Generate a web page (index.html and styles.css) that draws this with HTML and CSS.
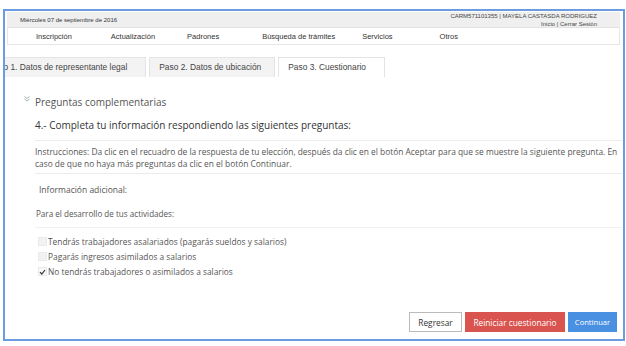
FILE: index.html
```html
<!DOCTYPE html>
<html lang="es">
<head>
<meta charset="utf-8">
<link rel="stylesheet" href="styles.css">
</head>
<body>
<div class="frame">
  <div class="header">
    <div class="topbar">
      <span class="date">Miércoles 07 de septiembre de 2016</span>
      <div class="user">
        <div>CARM571101355 | MAYELA CASTASDA RODRIGUEZ</div>
        <div>Inicio | Cerrar Sesión</div>
      </div>
    </div>
    <nav class="nav">
      <span class="n1">Inscripción</span>
      <span class="n2">Actualización</span>
      <span class="n3">Padrones</span>
      <span class="n4">Búsqueda de trámites</span>
      <span class="n5">Servicios</span>
      <span class="n6">Otros</span>
    </nav>
  </div>
  <div class="tabs">
    <div class="tabtrack">
      <div class="tab t1">Paso 1. Datos de representante legal</div>
      <div class="tab t2">Paso 2. Datos de ubicación</div>
      <div class="tab t3 active">Paso 3. Cuestionario</div>
    </div>
  </div>
  <div class="content">
    <div class="section-title">
      <svg class="collapse" width="6" height="6" viewBox="0 0 6 6"><path d="M0.5 0.5 L3 2.5 L5.5 0.5 M0.5 3 L3 5 L5.5 3" fill="none" stroke="#9aa" stroke-width="0.9"/></svg>
      <span>Preguntas complementarias</span>
    </div>
    <h2 class="question">4.- Completa tu información respondiendo las siguientes preguntas:</h2>
    <p class="instructions">Instrucciones: Da clic en el recuadro de la respuesta de tu elección, después da clic en el botón Aceptar para que se muestre la siguiente pregunta. En caso de que no haya más preguntas da clic en el botón Continuar.</p>
    <div class="info">Información adicional:</div>
    <div class="sub">Para el desarrollo de tus actividades:</div>
    <ul class="options">
      <li><span class="box"></span>Tendrás trabajadores asalariados (pagarás sueldos y salarios)</li>
      <li><span class="box"></span>Pagarás ingresos asimilados a salarios</li>
      <li><span class="box checked"><svg width="7" height="6" viewBox="0 0 7 6"><path d="M1 3.2 L2.8 5 L6 1" fill="none" stroke="#333" stroke-width="1.2"/></svg></span>No tendrás trabajadores o asimilados a salarios</li>
    </ul>
    <div class="actions">
      <button class="btn back">Regresar</button>
      <button class="btn reset">Reiniciar cuestionario</button>
      <button class="btn next">Continuar</button>
    </div>
  </div>
</div>
</body>
</html>
```
FILE: styles.css
```css
html, body {
  margin: 0;
  padding: 0;
  background: #fff;
}
.frame {
  margin: 9px 1px 0 3px;
  height: 328px;
  border: 2px solid #6b9be0;
  display: flex;
  flex-direction: column;
  font-family: "Open Sans", sans-serif;
  color: #555;
  overflow: hidden;
}
.header {
  margin: 1px 3px 0 2px;
  font-family: "Liberation Sans", Arial, sans-serif;
}
.topbar {
  background: #efefef;
  height: 15px;
  display: flex;
  justify-content: space-between;
  align-items: flex-start;
  border-bottom: 1px solid #e2e2e2;
}
.date {
  font-size: 6px;
  color: #333;
  padding: 5px 0 0 13px;
}
.user {
  font-size: 6px;
  color: #444;
  text-align: right;
  padding: 0 23px 0 0;
  line-height: 8px;
}
.nav {
  height: 16px;
  border: 1px solid #e6e6e6;
  border-top: none;
  display: flex;
  align-items: center;
  font-size: 7.5px;
  color: #333;
}
.nav span { display: block; }
.n1 { margin-left: 28px; }
.n2 { margin-left: 39px; }
.n3 { margin-left: 32px; }
.n4 { margin-left: 43px; }
.n5 { margin-left: 27px; }
.n6 { margin-left: 47px; }
.tabs {
  margin-top: 12px;
  height: 20px;
  overflow: hidden;
  font-family: "Liberation Sans", Arial, sans-serif;
  font-size: 8.4px;
}
.tabtrack {
  display: flex;
  gap: 3px;
  margin-left: -29px;
}
.tab {
  height: 19px;
  line-height: 19px;
  background: #f3f3f3;
  border: 1px solid #e4e4e4;
  border-bottom: none;
  color: #444;
  white-space: nowrap;
}
.t1 { padding: 0 18px 0 12px; }
.t2 { padding: 0 13px 0 9px; }
.t3 { padding: 0 18px 0 9px; }
.tab.active { background: #fff; }
.content {
  padding: 0 1px 0 30px;
  flex: 1;
  display: flex;
  flex-direction: column;
}
.section-title {
  position: relative;
  margin-top: 18px;
  font-size: 10px;
  color: #555;
  line-height: 14px;
}
.collapse {
  position: absolute;
  left: -11px;
  top: 1px;
}
.question {
  margin: 9px 0 0;
  font-size: 10px;
  font-weight: 400;
  color: #333;
  line-height: 15px;
  padding-bottom: 7px;
  border-bottom: 1px solid #ececec;
}
.instructions {
  margin: 0;
  padding: 5px 0 3px;
  font-size: 8.4px;
  line-height: 12px;
  color: #555;
  border-bottom: 1px solid #ececec;
}
.info {
  margin-top: 10px;
  padding-left: 4px;
  font-size: 8.5px;
  color: #555;
}
.sub {
  margin-top: 13px;
  padding-left: 1px;
  font-size: 8.1px;
  color: #555;
  padding-bottom: 8px;
  border-bottom: 1px solid #f0f0f0;
}
.options {
  list-style: none;
  margin: 6px 0 0;
  padding: 0 0 0 3px;
  font-size: 8.35px;
  color: #555;
}
.options li {
  display: flex;
  align-items: center;
  height: 15px;
}
.box {
  width: 9px;
  height: 9px;
  background: #f2f2f2;
  border: 1px solid #eaeaea;
  box-sizing: border-box;
  margin-right: 1px;
  display: flex;
  align-items: center;
  justify-content: center;
}
.box.checked { background: #f7f7f7; }
.actions {
  margin-top: auto;
  margin-bottom: 7px;
  display: flex;
  justify-content: flex-end;
  gap: 3px;
  padding-right: 5px;
}
.btn {
  font-family: "Open Sans", sans-serif;
  font-size: 8.3px;
  height: 20px;
  border: 1px solid #ccc;
  padding: 0;
  text-align: center;
  cursor: pointer;
}
.back { width: 53px; background: #fff; color: #333; border-color: #bbb; }
.reset { width: 100px; background: #d9534f; color: #fff; border-color: #d9534f; }
.next { width: 49px; background: #4a90e2; color: #fff; border-color: #4a90e2; font-size: 7.6px; }
```
